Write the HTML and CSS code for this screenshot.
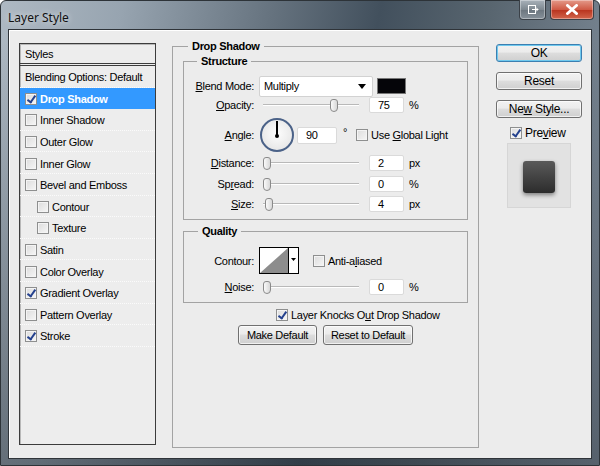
FILE: index.html
```html
<!DOCTYPE html>
<html lang="en">

<head>
    <meta charset="UTF-8">
    <meta name="viewport" content="width=device-width, initial-scale=1.0">
    <title>Layer Style</title>
    <link rel="stylesheet" href="styles.css">
</head>

<body>
    <div class="window">
        <div class="titlebar">
            <span class="title">Layer Style</span>
            <div class="caption">
                <span class="cap-btn">
                    <svg width="12" height="11" viewBox="0 0 12 11">
                        <rect x="1.5" y="1.5" width="7" height="8" fill="none" stroke="#fff" />
                        <path d="M5 5.5h6M9 3.5l2 2-2 2" fill="none" stroke="#fff" />
                    </svg>
                </span>
                <span class="cap-btn close">
                    <svg width="14" height="11" viewBox="0 0 14 11">
                        <path d="M2.5 1.5l9 8M11.5 1.5l-9 8" stroke="#fff" stroke-width="3" stroke-linecap="round" />
                    </svg>
                </span>
            </div>
        </div>

        <div class="client">
            <!-- effects list -->
            <div class="styles-list">
                <div class="list-head">Styles</div>
                <div class="list-row">Blending Options: Default</div>
                <div class="list-row selected"><span class="cb on"></span>Drop Shadow</div>
                <div class="list-row"><span class="cb"></span>Inner Shadow</div>
                <div class="list-row"><span class="cb"></span>Outer Glow</div>
                <div class="list-row"><span class="cb"></span>Inner Glow</div>
                <div class="list-row"><span class="cb"></span>Bevel and Emboss</div>
                <div class="list-row sub"><span class="cb"></span>Contour</div>
                <div class="list-row sub"><span class="cb"></span>Texture</div>
                <div class="list-row"><span class="cb"></span>Satin</div>
                <div class="list-row"><span class="cb"></span>Color Overlay</div>
                <div class="list-row"><span class="cb on"></span>Gradient Overlay</div>
                <div class="list-row"><span class="cb"></span>Pattern Overlay</div>
                <div class="list-row"><span class="cb on"></span>Stroke</div>
            </div>

            <!-- settings for the selected effect -->
            <fieldset class="group main">
                <legend>Drop Shadow</legend>

                <fieldset class="group structure">
                    <legend>Structure</legend>

                    <div class="f-row blend">
                        <span class="f-label"><u>B</u>lend Mode:</span>
                        <span class="select">Multiply<span class="arrow"></span></span>
                        <span class="swatch"></span>
                    </div>

                    <div class="f-row">
                        <span class="f-label"><u>O</u>pacity:</span>
                        <span class="slider"><span class="thumb" style="left: 67px;"></span></span>
                        <span class="field">75</span>
                        <span class="unit">%</span>
                    </div>

                    <div class="f-row angle">
                        <span class="f-label"><u>A</u>ngle:</span>
                        <span class="dial"><span class="hand"></span></span>
                        <span class="field wide">90</span>
                        <span class="unit deg">°</span>
                        <span class="cb global"></span>
                        <span class="cb-label">Use <u>G</u>lobal Light</span>
                    </div>

                    <div class="f-row distance">
                        <span class="f-label"><u>D</u>istance:</span>
                        <span class="slider"><span class="thumb" style="left: 0px;"></span></span>
                        <span class="field">2</span>
                        <span class="unit">px</span>
                    </div>

                    <div class="f-row spread">
                        <span class="f-label">Sp<u>r</u>ead:</span>
                        <span class="slider"><span class="thumb" style="left: 0px;"></span></span>
                        <span class="field">0</span>
                        <span class="unit">%</span>
                    </div>

                    <div class="f-row size">
                        <span class="f-label"><u>S</u>ize:</span>
                        <span class="slider"><span class="thumb" style="left: 2px;"></span></span>
                        <span class="field">4</span>
                        <span class="unit">px</span>
                    </div>
                </fieldset>

                <fieldset class="group quality">
                    <legend>Quality</legend>

                    <div class="f-row contour">
                        <span class="f-label">Contour:</span>
                        <span class="curve">
                            <svg width="40" height="27" viewBox="0 0 40 27">
                                <rect x="0.5" y="0.5" width="39" height="26" fill="#fff" stroke="#000" />
                                <path d="M1 26L29 1V26Z" fill="#8d8d8d" />
                                <path d="M29.5 1v25" stroke="#000" />
                                <path d="M32 11h5l-2.5 3z" fill="#000" />
                            </svg>
                        </span>
                        <span class="cb anti"></span>
                        <span class="cb-label">Anti-a<u>l</u>iased</span>
                    </div>

                    <div class="f-row noise">
                        <span class="f-label"><u>N</u>oise:</span>
                        <span class="slider"><span class="thumb" style="left: 0px;"></span></span>
                        <span class="field">0</span>
                        <span class="unit">%</span>
                    </div>
                </fieldset>

                <div class="knockout">
                    <span class="cb on"></span>
                    <span class="cb-label">Layer Knocks O<u>u</u>t Drop Shadow</span>
                </div>

                <div class="defaults">
                    <button type="button" class="btn make">Make Default</button>
                    <button type="button" class="btn reset-def">Reset to Default</button>
                </div>
            </fieldset>

            <!-- dialog actions -->
            <div class="actions">
                <button type="button" class="btn default">OK</button>
                <button type="button" class="btn">Reset</button>
                <button type="button" class="btn">Ne<u>w</u> Style...</button>
                <div class="preview-toggle">
                    <span class="cb on"></span>
                    <span class="cb-label">Pre<u>v</u>iew</span>
                </div>
                <div class="preview">
                    <span class="preview-shape"></span>
                </div>
            </div>
        </div>
    </div>
</body>

</html>
```

FILE: styles.css
```css
* {
  margin: 0;
  padding: 0;
  box-sizing: border-box;
}

body {
  background-color: #fff;
  font-family: "Liberation Sans", Arial, sans-serif;
  font-size: 11px;
  letter-spacing: -0.3px;
  color: #000;
}

u {
  text-decoration: underline;
  text-underline-offset: 1px;
}

/* window frame */
.window {
  width: 600px;
  height: 466px;
  padding: 0 7px 8px;
  border-radius: 6px 6px 0 0;
  border: 1px solid #2d3338;
  background:
    linear-gradient(to bottom, rgba(30, 38, 46, 0) 40px, rgba(30, 38, 46, 0.45) 100%),
    linear-gradient(100deg, #aeb9c3 0%, #97a4b0 18%, #66737f 40%, #42505d 56%, #58656f 72%, #8592a0 100%);
}

.titlebar {
  height: 28px;
  display: flex;
  justify-content: space-between;
  align-items: flex-start;
}

.titlebar .title {
  margin-top: 8px;
  font-family: "Noto Sans", "Liberation Sans", sans-serif;
  font-size: 12px;
  letter-spacing: 0;
  color: #111;
  text-shadow: 0 0 6px rgba(255, 255, 255, 0.8);
}

.caption {
  display: flex;
  gap: 4px;
  margin-right: -2px;
  margin-top: -1px;
}

.cap-btn {
  width: 27px;
  height: 20px;
  display: flex;
  justify-content: center;
  align-items: center;
  border: 1px solid #3b4148;
  border-top: none;
  border-radius: 0 0 4px 4px;
  background: linear-gradient(to bottom, #a9b2ba, #7e8890 50%, #6b757e 51%, #87919a);
  box-shadow: inset 0 0 0 1px rgba(255, 255, 255, 0.35);
}

.cap-btn.close {
  width: 44px;
  background: linear-gradient(to bottom, #e49a8a, #cf5a45 50%, #b8321d 51%, #d2654c);
}

.client {
  height: 430px;
  display: flex;
  align-items: flex-start;
  padding: 13px 0 0 10px;
  background-color: #ececec;
  border: 1px solid #2f3439;
  box-shadow: inset 1px 1px 0 #fff;
}

/* left list of styles */
.styles-list {
  width: 137px;
  height: 402px;
  border: 1px solid #3c3c3c;
  box-shadow: inset 1px 1px 0 #b8b8b8;
  background-color: #ededed;
}

.list-head {
  height: 22px;
  line-height: 20px;
  padding-left: 5px;
  border-bottom: 3px double #3c3c3c;
}

.list-row {
  height: 21.6px;
  display: flex;
  align-items: center;
  padding: 2px 0 0 5px;
  border-bottom: 1px dotted #fbfbfb;
}

.list-row .cb {
  margin-right: 3px;
}

.list-row.sub {
  padding-left: 17px;
}

.list-row.selected {
  background-color: #3399ff;
  color: #fff;
  font-weight: bold;
  border-bottom-color: #3399ff;
}

/* checkboxes */
.cb {
  width: 12px;
  height: 12px;
  flex: none;
  position: relative;
  border: 1px solid #8e8f8f;
  background: linear-gradient(135deg, #dcdcdc, #f6f6f6);
  box-shadow: inset 0 0 0 1px #f4f4f4;
}

.cb.on::after {
  content: "";
  position: absolute;
  left: 3px;
  top: 0;
  width: 3px;
  height: 7px;
  border: solid #24418e;
  border-width: 0 2px 2px 0;
  transform: rotate(35deg);
}

.cb-label {
  margin-left: 3px;
}

/* group boxes */
.group {
  border: 1px solid #a3a3a3;
  min-width: 0;
}

.group legend {
  font-weight: bold;
  line-height: 13px;
  padding: 0 4px;
  margin-left: 14px;
}

.main {
  width: 307px;
  height: 408px;
  margin: -3px 0 0 16px;
  padding: 2px 10px 0;
}

.main > legend {
  margin-left: 5px;
}

.structure {
  padding: 7px 0 7px;
}

.structure > legend {
  margin-left: 13px;
}

.quality {
  margin-top: 5px;
  padding: 9px 0 7px;
}

.quality > legend {
  margin-left: 14px;
}

.f-row {
  height: 16px;
  display: flex;
  align-items: center;
}

.f-label {
  width: 70px;
  margin-right: 5px;
  text-align: right;
}

.blend {
  height: 22px;
}

.angle {
  height: 34px;
  margin-top: 5px;
}

.distance {
  margin-top: 3px;
}

.spread {
  margin-top: 5px;
}

.size {
  margin-top: 4px;
}

.contour {
  height: 27px;
}

.noise {
  margin-top: 5px;
}

.select {
  width: 114px;
  height: 21px;
  display: flex;
  align-items: center;
  justify-content: space-between;
  padding: 0 4px;
  background-color: #fff;
  border: 1px solid #d2d2d2;
  border-radius: 2px;
}

.select .arrow {
  width: 0;
  height: 0;
  border-left: 4px solid transparent;
  border-right: 4px solid transparent;
  border-top: 5px solid #000;
  margin-right: 2px;
}

.swatch {
  width: 29px;
  height: 16px;
  margin-left: 4px;
  background-color: #050509;
  border: 1px solid #777;
}

.slider {
  width: 96px;
  height: 13px;
  margin-left: 4px;
  position: relative;
  background: linear-gradient(to bottom, transparent 5px, #b9b9b9 5px, #b9b9b9 6px, #fff 6px, #fff 7px, transparent 7px);
}

.slider .thumb {
  position: absolute;
  top: 0;
  width: 8px;
  height: 13px;
  border: 1px solid #8a8a8a;
  border-radius: 3px 3px 4px 4px;
  background: linear-gradient(to right, #fafafa, #d8d8d8);
}

.field {
  width: 35px;
  height: 16px;
  margin-left: 10px;
  padding-left: 8px;
  line-height: 14px;
  background-color: #fff;
  border: 1px solid #dadada;
  border-radius: 2px;
}

.field.wide {
  width: 40px;
  height: 17px;
  margin-left: 3px;
}

.unit {
  margin-left: 5px;
}

.unit.deg {
  margin-left: 6px;
  margin-top: -6px;
}

.cb.global {
  margin-left: 9px;
}

.dial {
  width: 34px;
  height: 34px;
  margin-left: 1px;
  position: relative;
  border: 2px solid #4b6288;
  border-radius: 50%;
  background: radial-gradient(circle at 50% 45%, #fdfdfd, #e6e6e6 80%);
}

.dial .hand {
  position: absolute;
  left: 14px;
  top: 1px;
  width: 2px;
  height: 15px;
  background-color: #000;
}

.dial .hand::after {
  content: "";
  position: absolute;
  left: -1px;
  bottom: -2px;
  width: 4px;
  height: 4px;
  border-radius: 50%;
  background-color: #000;
}

.curve {
  height: 27px;
}

.cb.anti {
  margin-left: 14px;
}

.knockout {
  height: 16px;
  margin: 4px 0 0 93px;
  display: flex;
  align-items: center;
}

.defaults {
  display: flex;
  gap: 6px;
  margin: 2px 0 0 55px;
}

/* buttons */
.btn {
  height: 20px;
  font-family: inherit;
  font-size: 11px;
  letter-spacing: -0.3px;
  color: #000;
  border: 1px solid #707070;
  border-radius: 3px;
  background: linear-gradient(to bottom, #f2f2f2, #ebebeb 45%, #dddddd 50%, #cfcfcf);
  box-shadow: inset 0 0 0 1px rgba(255, 255, 255, 0.7);
}

.btn.make {
  width: 79px;
}

.btn.reset-def {
  width: 90px;
}

.actions {
  width: 86px;
  margin: 1px 0 0 17px;
  display: flex;
  flex-direction: column;
  align-items: flex-start;
}

.actions .btn {
  width: 86px;
  height: 18px;
  margin-bottom: 10px;
  font-size: 12px;
}

.actions .btn.default {
  border-color: #3c7fb1;
  box-shadow: inset 0 0 0 1px #6fc9ee;
}

.preview-toggle {
  height: 14px;
  margin-top: -2px;
  display: flex;
  align-items: center;
  padding-left: 14px;
  font-size: 12px;
}

.preview {
  width: 64px;
  height: 65px;
  margin: 3px 0 0 11px;
  display: flex;
  justify-content: center;
  align-items: center;
  padding-top: 3px;
  border: 1px solid #d6d6d6;
  background-color: #e2e2e2;
}

.preview-shape {
  width: 32px;
  height: 32px;
  border-radius: 3px;
  background: linear-gradient(to bottom, #5a5a5a, #2c2c2c);
  box-shadow: 0 2px 4px rgba(0, 0, 0, 0.45);
}
```
